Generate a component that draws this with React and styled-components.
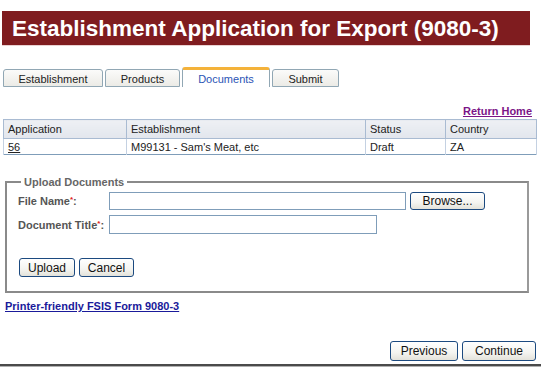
import React from "react";
import styled, { createGlobalStyle } from "styled-components";

const Global = createGlobalStyle`
  html, body { margin: 0; padding: 0; background: #fff; }
  body { font-family: "Liberation Sans", Arial, sans-serif; }
`;

const Page = styled.div`
  width: 541px;
  height: 367px;
  position: relative;
  overflow: hidden;
  display: flex;
  flex-direction: column;
`;

const Header = styled.h1`
  margin: 11px 11px 0 2px;
  height: 34px;
  background: #7f1c1f;
  color: #fff;
  font-size: 22.5px;
  font-weight: bold;
  line-height: 35px;
  padding-left: 10px;
  border-bottom: 1px solid #e9d2d2;
`;

const TabBar = styled.div`
  display: flex;
  align-items: flex-end;
  gap: 2px;
  margin: 21px 0 0 3px;
  height: 20px;
`;

const Tab = styled.div`
  box-sizing: border-box;
  width: ${p => p.$w}px;
  height: ${p => (p.$active ? 20 : 18)}px;
  display: flex;
  align-items: center;
  justify-content: center;
  font-size: 11px;
  color: ${p => (p.$active ? "#2a54b5" : "#222")};
  background: ${p => (p.$active ? "#fff" : "linear-gradient(#fbfbfa, #ecebe6)")};
  border: 1px solid #91a7b4;
  border-bottom: ${p => (p.$active ? "none" : "1px solid #91a7b4")};
  border-top: ${p => (p.$active ? "3px solid #f4b23a" : "1px solid #91a7b4")};
  border-radius: 3px 3px 0 0;
  padding-top: ${p => (p.$active ? 0 : 1)}px;
`;

const ReturnRow = styled.div`
  display: flex;
  justify-content: flex-end;
  margin: 17px 9px 0 0;
  height: 14px;
`;

const ReturnLink = styled.a`
  font-size: 11px;
  font-weight: bold;
  color: #7b1487;
  text-decoration: underline;
  line-height: 14px;
`;

const Table = styled.table`
  margin: 1px 0 0 3px;
  width: 534px;
  border-collapse: collapse;
  border: 1px solid #7f9db9;
  font-size: 11px;
  color: #222;
`;

const Th = styled.th`
  text-align: left;
  font-weight: normal;
  height: 18px;
  padding: 0 4px;
  background: linear-gradient(#eef0f4, #e2e6ed);
  border: 1px solid #a9bbd2;
  width: ${p => p.$w}px;
`;

const Td = styled.td`
  height: 15px;
  padding: 0 4px;
  border: 1px solid #c4d1e2;
  border-bottom: none;
`;

const AppLink = styled.a`
  color: #222;
  text-decoration: underline;
`;

const Fieldset = styled.fieldset`
  margin: 21px 0 0 5px;
  width: 524px;
  box-sizing: border-box;
  height: 117px;
  border: 2px solid #8a8a8a;
  border-right-color: #9a9a9a;
  padding: 0 0 0 11px;
`;

const Legend = styled.legend`
  font-size: 11px;
  font-weight: bold;
  color: #666;
  padding: 0 3px;
  margin-left: 3px;
`;

const FormRow = styled.div`
  display: flex;
  align-items: center;
  height: 19px;
  margin-top: ${p => p.$mt}px;
`;

const Label = styled.label`
  width: 91px;
  font-size: 11px;
  font-weight: bold;
  color: #555;
  white-space: nowrap;
`;

const Req = styled.sup`
  color: #e02020;
  font-size: 8px;
  vertical-align: 3px;
  line-height: 0;
`;

const TextInput = styled.input`
  box-sizing: border-box;
  width: ${p => p.$w}px;
  height: ${p => p.$h}px;
  border: 1px solid #7f9db9;
  margin: 0;
  padding: 0;
  background: #fff;
`;

const Button = styled.button`
  box-sizing: border-box;
  width: ${p => p.$w}px;
  height: ${p => p.$h || 19}px;
  margin: 0 0 0 ${p => p.$ml || 0}px;
  padding: 0;
  font-family: "Liberation Sans", Arial, sans-serif;
  font-size: 12px;
  color: #111;
  background: linear-gradient(#ffffff 0%, #f4f4f0 60%, #e3e2da 100%);
  border: 1px solid #1c4a80;
  border-radius: 3px;
`;

const ButtonRow = styled.div`
  display: flex;
  gap: 4px;
  margin-top: 24px;
  margin-left: 1px;
`;

const PrintLink = styled.a`
  margin: 7px 0 0 5px;
  font-size: 11px;
  font-weight: bold;
  color: #1a1a9a;
  text-decoration: underline;
  align-self: flex-start;
`;

const Footer = styled.div`
  display: flex;
  justify-content: flex-end;
  gap: 4px;
  margin: 29px 5px 0 0;
`;

const BottomLine = styled.div`
  margin-top: 3px;
  height: 2px;
  background: #4a4a4a;
  border-bottom: 1px solid #b0b0b0;
`;

export default function App() {
  return (
    <>
      <Global />
      <Page>
        <Header>Establishment Application for Export (9080-3)</Header>
        <TabBar>
          <Tab $w={100}>Establishment</Tab>
          <Tab $w={75}>Products</Tab>
          <Tab $w={88} $active>Documents</Tab>
          <Tab $w={67}>Submit</Tab>
        </TabBar>
        <ReturnRow>
          <ReturnLink href="#">Return Home</ReturnLink>
        </ReturnRow>
        <Table>
          <thead>
            <tr>
              <Th $w={114}>Application</Th>
              <Th $w={230}>Establishment</Th>
              <Th $w={71}>Status</Th>
              <Th>Country</Th>
            </tr>
          </thead>
          <tbody>
            <tr>
              <Td><AppLink href="#">56</AppLink></Td>
              <Td>M99131 - Sam's Meat, etc</Td>
              <Td>Draft</Td>
              <Td>ZA</Td>
            </tr>
          </tbody>
        </Table>
        <Fieldset>
          <Legend>Upload Documents</Legend>
          <FormRow $mt={3}>
            <Label>File Name<Req>*</Req>:</Label>
            <TextInput $w={297} $h={18} />
            <Button $w={75} $h={18} $ml={4}>Browse...</Button>
          </FormRow>
          <FormRow $mt={5}>
            <Label>Document Title<Req>*</Req>:</Label>
            <TextInput $w={268} $h={19} />
          </FormRow>
          <ButtonRow>
            <Button $w={56}>Upload</Button>
            <Button $w={55}>Cancel</Button>
          </ButtonRow>
        </Fieldset>
        <PrintLink href="#">Printer-friendly FSIS Form 9080-3</PrintLink>
        <Footer>
          <Button $w={68} $h={20}>Previous</Button>
          <Button $w={74} $h={20}>Continue</Button>
        </Footer>
        <BottomLine />
      </Page>
    </>
  );
}
